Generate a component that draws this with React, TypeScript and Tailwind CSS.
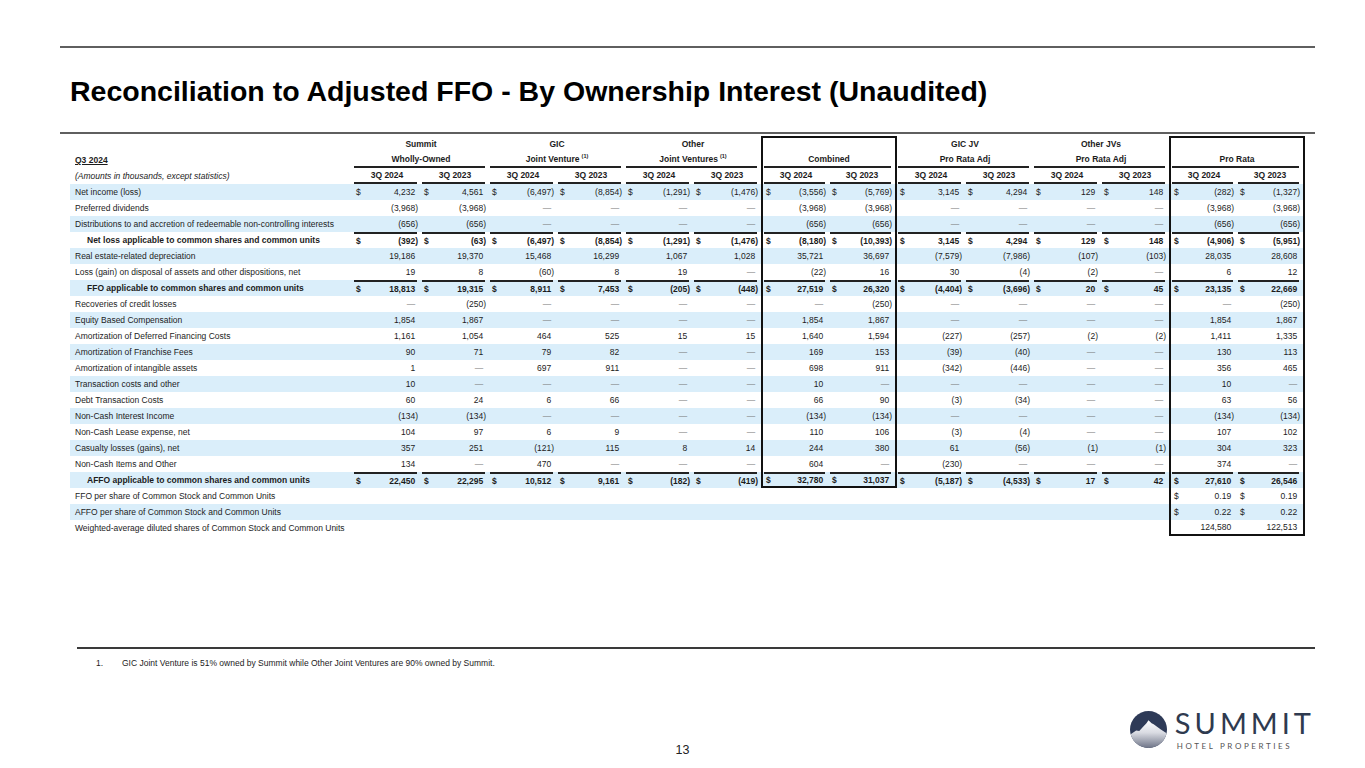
import React from "react";

const D = "—";

type Row = {
  label: string;
  vals: string[];
  dollar?: "all" | "pro";
  bold?: boolean;
  line?: boolean;
};

const E = "";

const rows: Row[] = [
  { label: "Net income (loss)", dollar: "all", vals: ["4,232", "4,561", "(6,497)", "(8,854)", "(1,291)", "(1,476)", "(3,556)", "(5,769)", "3,145", "4,294", "129", "148", "(282)", "(1,327)"] },
  { label: "Preferred dividends", vals: ["(3,968)", "(3,968)", D, D, D, D, "(3,968)", "(3,968)", D, D, D, D, "(3,968)", "(3,968)"] },
  { label: "Distributions to and accretion of redeemable non-controlling interests", vals: ["(656)", "(656)", D, D, D, D, "(656)", "(656)", D, D, D, D, "(656)", "(656)"] },
  { label: "Net loss applicable to common shares and common units", bold: true, line: true, dollar: "all", vals: ["(392)", "(63)", "(6,497)", "(8,854)", "(1,291)", "(1,476)", "(8,180)", "(10,393)", "3,145", "4,294", "129", "148", "(4,906)", "(5,951)"] },
  { label: "Real estate-related depreciation", vals: ["19,186", "19,370", "15,468", "16,299", "1,067", "1,028", "35,721", "36,697", "(7,579)", "(7,986)", "(107)", "(103)", "28,035", "28,608"] },
  { label: "Loss (gain) on disposal of assets and other dispositions, net", vals: ["19", "8", "(60)", "8", "19", D, "(22)", "16", "30", "(4)", "(2)", D, "6", "12"] },
  { label: "FFO applicable to common shares and common units", bold: true, line: true, dollar: "all", vals: ["18,813", "19,315", "8,911", "7,453", "(205)", "(448)", "27,519", "26,320", "(4,404)", "(3,696)", "20", "45", "23,135", "22,669"] },
  { label: "Recoveries of credit losses", vals: [D, "(250)", D, D, D, D, D, "(250)", D, D, D, D, D, "(250)"] },
  { label: "Equity Based Compensation", vals: ["1,854", "1,867", D, D, D, D, "1,854", "1,867", D, D, D, D, "1,854", "1,867"] },
  { label: "Amortization of Deferred Financing Costs", vals: ["1,161", "1,054", "464", "525", "15", "15", "1,640", "1,594", "(227)", "(257)", "(2)", "(2)", "1,411", "1,335"] },
  { label: "Amortization of Franchise Fees", vals: ["90", "71", "79", "82", D, D, "169", "153", "(39)", "(40)", D, D, "130", "113"] },
  { label: "Amortization of intangible assets", vals: ["1", D, "697", "911", D, D, "698", "911", "(342)", "(446)", D, D, "356", "465"] },
  { label: "Transaction costs and other", vals: ["10", D, D, D, D, D, "10", D, D, D, D, D, "10", D] },
  { label: "Debt Transaction Costs", vals: ["60", "24", "6", "66", D, D, "66", "90", "(3)", "(34)", D, D, "63", "56"] },
  { label: "Non-Cash Interest Income", vals: ["(134)", "(134)", D, D, D, D, "(134)", "(134)", D, D, D, D, "(134)", "(134)"] },
  { label: "Non-Cash Lease expense, net", vals: ["104", "97", "6", "9", D, D, "110", "106", "(3)", "(4)", D, D, "107", "102"] },
  { label: "Casualty losses (gains), net", vals: ["357", "251", "(121)", "115", "8", "14", "244", "380", "61", "(56)", "(1)", "(1)", "304", "323"] },
  { label: "Non-Cash Items and Other", vals: ["134", D, "470", D, D, D, "604", D, "(230)", D, D, D, "374", D] },
  { label: "AFFO applicable to common shares and common units", bold: true, line: true, dollar: "all", vals: ["22,450", "22,295", "10,512", "9,161", "(182)", "(419)", "32,780", "31,037", "(5,187)", "(4,533)", "17", "42", "27,610", "26,546"] },
  { label: "FFO per share of Common Stock and Common Units", dollar: "pro", vals: [E, E, E, E, E, E, E, E, E, E, E, E, "0.19", "0.19"] },
  { label: "AFFO per share of Common Stock and Common Units", dollar: "pro", vals: [E, E, E, E, E, E, E, E, E, E, E, E, "0.22", "0.22"] },
  { label: "Weighted-average diluted shares of Common Stock and Common Units", vals: [E, E, E, E, E, E, E, E, E, E, E, E, "124,580", "122,513"] },
];

const AFFO_IDX = 18;
const LAST_IDX = rows.length - 1;

function boxSides(i: number, r: number) {
  const inCombined = r <= AFFO_IDX;
  if (i === 12 || (i === 6 && inCombined)) return "border-l-2 border-[#111]";
  if (i === 13 || (i === 7 && inCombined)) return "border-r-2 border-[#111]";
  return "";
}

function ValueCell({ v, dollar, bold, line, i, r }: { v: string; dollar: boolean; bold: boolean; line: boolean; i: number; r: number }) {
  let bottom = "";
  if ((i === 6 || i === 7) && r === AFFO_IDX) bottom = "border-b-2 border-[#111]";
  if ((i === 12 || i === 13) && r === LAST_IDX) bottom = "border-b-2 border-[#111]";
  const neg = v.endsWith(")");
  return (
    <div className={`w-[68px] shrink-0 flex flex-col ${boxSides(i, r)} ${bottom}`}>
      {line ? <div className="h-[2px] ml-[1px] mr-[4px] bg-[#222]" /> : null}
      <div className={`flex-1 flex items-center justify-between pl-[3px] pr-[3px] ${bold ? "font-bold" : ""}`}>
        <span>{dollar ? "$" : ""}</span>
        <span className={v === D ? "text-[#777]" : ""}>
          {v}
          {v && !neg ? <span className="invisible">)</span> : null}
        </span>
      </div>
    </div>
  );
}

const groups1 = ["Summit", "GIC", "Other", "", "GIC JV", "Other JVs", ""];

function Sup() {
  return <sup className="text-[5.5px] ml-[2px]">(1)</sup>;
}

const groups2: React.ReactNode[] = [
  "Wholly-Owned",
  <>Joint Venture<Sup /></>,
  <>Joint Ventures<Sup /></>,
  "Combined",
  "Pro Rata Adj",
  "Pro Rata Adj",
  "Pro Rata",
];

function groupBox(g: number) {
  if (g === 3 || g === 6) return "border-l-2 border-r-2 border-[#111]";
  return "";
}

function Logo() {
  return (
    <div className="flex items-center gap-[8px]">
      <svg width="37" height="37" viewBox="0 0 36 36">
        <defs>
          <clipPath id="lc">
            <circle cx="18" cy="18" r="18" />
          </clipPath>
          <linearGradient id="mg" x1="0" y1="0" x2="0" y2="1">
            <stop offset="0" stopColor="#ffffff" />
            <stop offset="0.45" stopColor="#d9dbe2" />
            <stop offset="1" stopColor="#6e7487" />
          </linearGradient>
        </defs>
        <g clipPath="url(#lc)">
          <rect x="0" y="0" width="36" height="36" fill="#2e3a57" />
          <path d="M0 23 L6 19 L9 19.5 L13 15 L16 12 L18 9 L21 12 L23 13 L26 15 L30 18 L36 22 L36 36 L0 36 Z" fill="url(#mg)" />
        </g>
      </svg>
      <div className="flex flex-col items-start">
        <div className="font-['Lato','Noto_Sans',sans-serif] text-[29px] leading-none tracking-[4px] text-[#2f3a4f] font-normal">SUMMIT</div>
        <div className="mt-[5px] font-['Lato','Noto_Sans',sans-serif] text-[8px] leading-none tracking-[2.6px] text-[#555] pl-[2px]">HOTEL PROPERTIES</div>
      </div>
    </div>
  );
}

export default function App() {
  return (
    <div className="w-[1365px] h-[768px] bg-white text-[#1c1c1c] font-['Liberation_Sans',Arial,sans-serif] flex flex-col overflow-hidden">
      <div className="h-[46px] shrink-0" />
      <div className="h-[2px] ml-[60px] w-[1255px] bg-[#5f5f5f] shrink-0" />
      <div className="h-[84px] shrink-0 flex items-center pl-[70px] pt-[2px]">
        <h1 className="text-[28.5px] font-bold text-black leading-none">Reconciliation to Adjusted FFO - By Ownership Interest (Unaudited)</h1>
      </div>
      <div className="h-[2px] ml-[60px] w-[1255px] bg-[#5f5f5f] shrink-0" />

      <div className="mt-[2px] ml-[70px] w-[1235px] flex flex-col text-[8.5px] leading-none shrink-0">
        {/* header row 1 */}
        <div className="flex h-[16px]">
          <div className="w-[283px] shrink-0" />
          {groups1.map((g, k) => (
            <div key={k} className={`w-[136px] shrink-0 flex items-center justify-center font-bold ${groupBox(k)} ${k === 3 || k === 6 ? "border-t-2" : ""}`}>
              {g}
            </div>
          ))}
        </div>
        {/* header row 2 */}
        <div className="flex h-[16px]">
          <div className="w-[283px] shrink-0 flex items-center pl-[5px] font-bold underline">Q3 2024</div>
          {groups2.map((g, k) => (
            <div key={k} className={`w-[136px] shrink-0 flex flex-col ${groupBox(k)}`}>
              <div className="flex-1 flex items-center justify-center font-bold">{g}</div>
              <div className="h-[2px] ml-[1px] mr-[4px] bg-[#222]" />
            </div>
          ))}
        </div>
        {/* header row 3 */}
        <div className="flex h-[16px]">
          <div className="w-[283px] shrink-0 flex items-center pl-[5px] italic">(Amounts in thousands, except statistics)</div>
          {Array.from({ length: 14 }).map((_, i) => (
            <div key={i} className={`w-[68px] shrink-0 flex flex-col ${boxSides(i, 0)}`}>
              <div className="flex-1 flex items-center justify-center font-bold">{i % 2 === 0 ? "3Q 2024" : "3Q 2023"}</div>
              <div className="h-[2px] ml-[1px] mr-[4px] bg-[#222]" />
            </div>
          ))}
        </div>
        {rows.map((row, r) => (
          <div key={r} className={`flex h-[16px] ${r % 2 === 0 ? "bg-[#daeefa]" : ""}`}>
            <div className={`w-[283px] shrink-0 flex items-center ${row.bold ? "pl-[17px] font-bold" : "pl-[5px]"} whitespace-nowrap`}>
              {row.label}
            </div>
            {row.vals.map((v, i) => (
              <ValueCell
                key={i}
                v={v}
                i={i}
                r={r}
                bold={!!row.bold}
                line={!!row.line}
                dollar={row.dollar === "all" || (row.dollar === "pro" && i >= 12)}
              />
            ))}
          </div>
        ))}
      </div>

      <div className="mt-[111px] h-[2px] ml-[77px] w-[1238px] bg-[#3a3a3a] shrink-0" />
      <div className="mt-[9px] flex items-center text-[8.5px] leading-none h-[10px] shrink-0">
        <span className="ml-[96px] w-[26px]">1.</span>
        <span>GIC Joint Venture is 51% owned by Summit while Other Joint Ventures are 90% owned by Summit.</span>
      </div>

      <div className="mt-[40px] grid grid-cols-3 items-end h-[46px] shrink-0">
        <div />
        <div className="flex justify-center text-[12.5px] leading-none text-[#222] pb-[2px]">13</div>
        <div className="flex justify-end pr-[50px] pb-[8px]">
          <Logo />
        </div>
      </div>
    </div>
  );
}
